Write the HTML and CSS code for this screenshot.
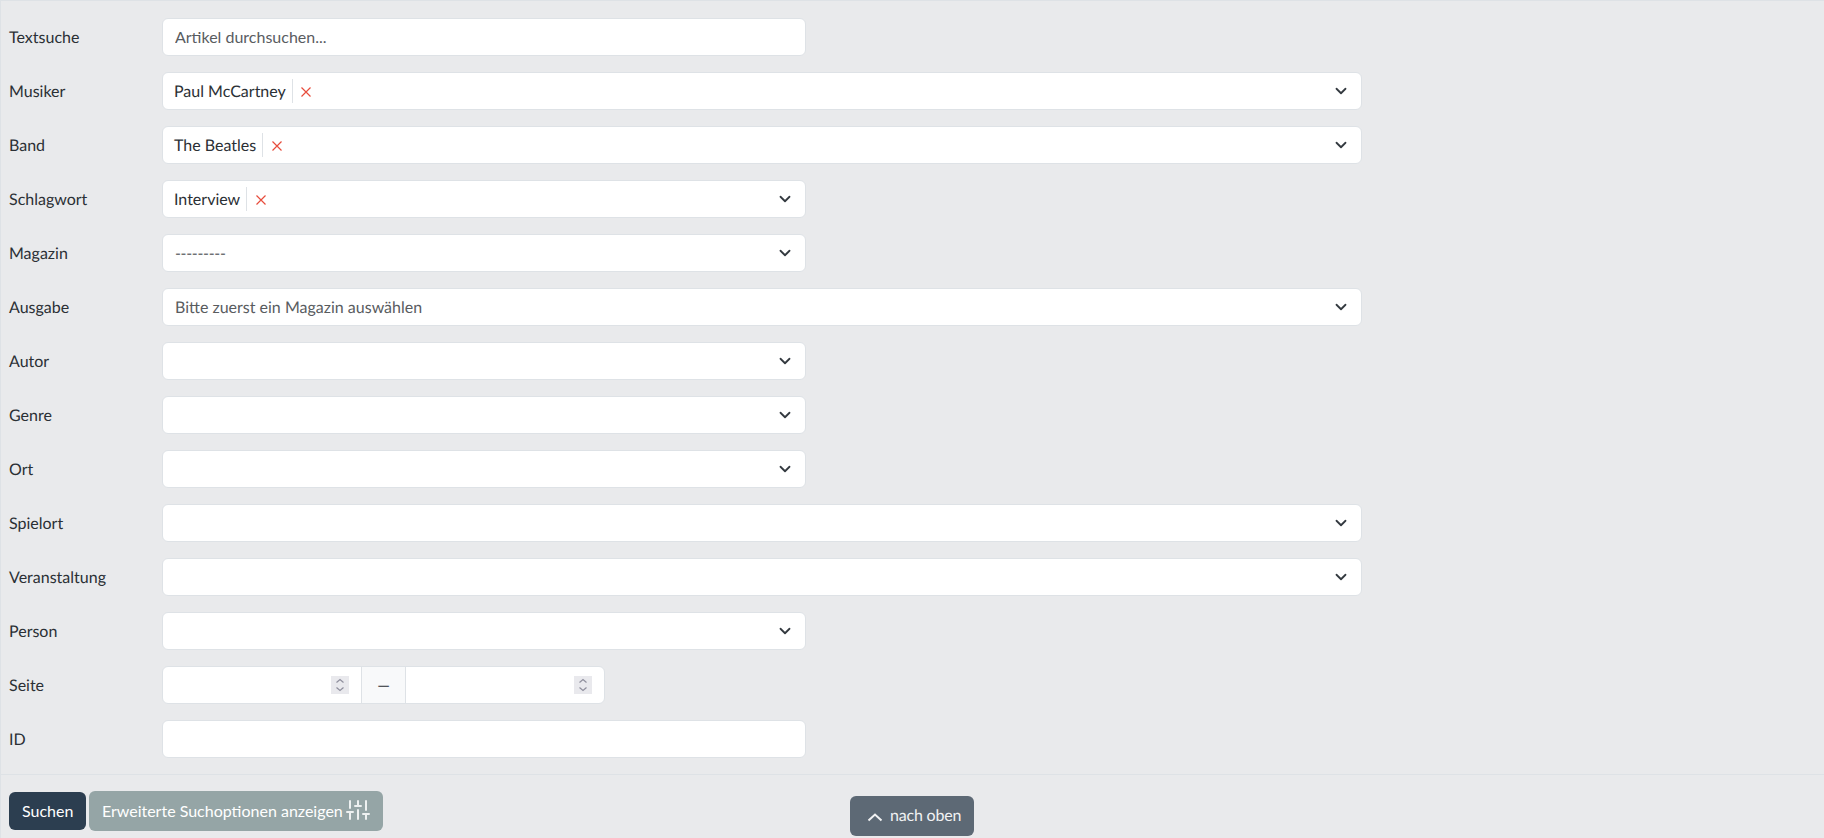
FILE: index.html
```html
<!DOCTYPE html>
<html lang="de">
<head>
<meta charset="utf-8">
<title>Artikelsuche</title>
<link rel="stylesheet" href="styles.css">
</head>
<body>
<svg class="defs" width="0" height="0" aria-hidden="true">
  <symbol id="chev" viewBox="0 0 16 16"><path d="M2 5l6 6 6-6" fill="none" stroke="#343a40" stroke-width="2.400" stroke-linecap="round" stroke-linejoin="round"/></symbol>
  <symbol id="cross" viewBox="0 0 10 10"><path d="M.5.5l9 9M9.500.5l-9 9" fill="none" stroke="#e74c3c" stroke-width="1.200"/></symbol>
  <symbol id="spin" viewBox="0 0 18 18"><path d="M5.500 6.500L9 3.500l3.500 3M5.500 11.500L9 14.500l3.500-3" fill="none" stroke="#8f8f9d" stroke-width="1.200"/></symbol>
</svg>
<form class="search">
  <div class="fields">
    <div class="row"><label>Textsuche</label><div class="ctl narrow"><input class="txt" type="text" placeholder="Artikel durchsuchen..."></div></div>
    <div class="row"><label>Musiker</label><div class="ctl wide tagged"><span class="tag">Paul McCartney</span><svg class="x"><use href="#cross"/></svg><svg class="chev"><use href="#chev"/></svg></div></div>
    <div class="row"><label>Band</label><div class="ctl wide tagged"><span class="tag">The Beatles</span><svg class="x"><use href="#cross"/></svg><svg class="chev"><use href="#chev"/></svg></div></div>
    <div class="row"><label>Schlagwort</label><div class="ctl narrow tagged"><span class="tag">Interview</span><svg class="x"><use href="#cross"/></svg><svg class="chev"><use href="#chev"/></svg></div></div>
    <div class="row"><label>Magazin</label><div class="ctl narrow"><span class="ph blank">---------</span><svg class="chev"><use href="#chev"/></svg></div></div>
    <div class="row"><label>Ausgabe</label><div class="ctl wide"><span class="ph">Bitte zuerst ein Magazin auswählen</span><svg class="chev"><use href="#chev"/></svg></div></div>
    <div class="row"><label>Autor</label><div class="ctl narrow"><svg class="chev"><use href="#chev"/></svg></div></div>
    <div class="row"><label>Genre</label><div class="ctl narrow"><svg class="chev"><use href="#chev"/></svg></div></div>
    <div class="row"><label>Ort</label><div class="ctl narrow"><svg class="chev"><use href="#chev"/></svg></div></div>
    <div class="row"><label>Spielort</label><div class="ctl wide"><svg class="chev"><use href="#chev"/></svg></div></div>
    <div class="row"><label>Veranstaltung</label><div class="ctl wide"><svg class="chev"><use href="#chev"/></svg></div></div>
    <div class="row"><label>Person</label><div class="ctl narrow"><svg class="chev"><use href="#chev"/></svg></div></div>
    <div class="row"><label>Seite</label>
      <div class="ctl range">
        <div class="num"><span class="spin"><svg><use href="#spin"/></svg></span></div>
        <div class="dash">—</div>
        <div class="num"><span class="spin"><svg><use href="#spin"/></svg></span></div>
      </div>
    </div>
    <div class="row"><label>ID</label><div class="ctl narrow"></div></div>
  </div>
  <div class="actions">
    <button class="btn primary" type="button">Suchen</button>
    <button class="btn secondary" type="button">Erweiterte Suchoptionen anzeigen
      <svg class="sliders" viewBox="0 0 24 24"><path d="M4 21v-7M4 10V3M12 21v-9M12 8V3M20 21v-5M20 12V3M1 14h6M9 8h6M17 16h6"/></svg>
    </button>
  </div>
</form>
<a class="top" href="#"><svg viewBox="0 0 16 10"><path d="M1.500 8.500L8 2.500l6.500 6"/></svg>nach oben</a>
</body>
</html>
```

FILE: styles.css
```css
* { box-sizing: border-box; }
html, body { margin: 0; height: 100%; }
body {
  font-family: Lato, "Liberation Sans", sans-serif;
  font-size: 16px;
  color: #2b3035;
  background: #e9eaec;
  overflow: hidden;
  text-rendering: geometricPrecision;
}
.defs { position: absolute; }
.search {
  height: 838px;
  border-top: 1px solid #dee2e6;
  border-left: 1px solid #dee2e6;
}
.fields {
  display: flex;
  flex-direction: column;
  gap: 16px;
  padding: 17px 0 16px 8px;
  border-bottom: 1px solid #dee2e6;
}
.row {
  display: grid;
  grid-template-columns: 153px 1fr;
  align-items: center;
  height: 38px;
}
.row label { line-height: 24px; margin-top: 2px; }
.ctl {
  position: relative;
  display: flex;
  align-items: center;
  height: 38px;
  background: #fff;
  border: 1px solid #dee2e6;
  border-radius: 6px;
}
.narrow { width: 644px; }
.wide { width: 1200px; }
.range { width: 443px; overflow: hidden; }
.txt {
  width: 100%;
  height: 100%;
  border: 0;
  border-radius: 6px;
  padding: 0 12px 2px;
  background: transparent;
  font: inherit;
  color: inherit;
}
.txt::placeholder { color: #595c5f; opacity: 1; }
.ph { padding: 0 0 0 12px; color: #595c5f; }
.blank { letter-spacing: -0.33px; }
.tag {
  display: flex;
  align-items: center;
  height: 24px;
  margin-left: 11px;
  padding: 0 6px 0 0;
  border-right: 1px solid #dee2e6;
}
.x { width: 10px; height: 10px; margin: 2px 0 0 8.5px; }
.chev {
  position: absolute;
  right: 14px;
  top: 12px;
  width: 12px;
  height: 12px;
}
.num {
  position: relative;
  flex: 1;
  height: 100%;
}
.dash {
  width: 45px;
  flex: none;
  height: 100%;
  display: flex;
  align-items: center;
  justify-content: center;
  background: #f8f9fa;
  border-left: 1px solid #dee2e6;
  border-right: 1px solid #dee2e6;
}
.spin {
  position: absolute;
  right: 12px;
  top: 9px;
  width: 18px;
  height: 18px;
  background: #e9e9ed;
}
.spin svg { display: block; width: 18px; height: 18px; }
.actions {
  display: flex;
  align-items: center;
  gap: 3px;
  padding: 16px 0 0 8px;
}
.btn {
  border: 0;
  border-radius: 6px;
  font: inherit;
  color: #fff;
  padding: 0 13px 2px;
  display: flex;
  align-items: center;
}
.primary { background: #2c3e50; height: 38px; }
.secondary { background: #95a5a6; height: 40px; gap: 3px; padding-left: 12.500px; }
.sliders {
  width: 24px;
  height: 24px;
  fill: none;
  stroke: #eef1f1;
  stroke-width: 2;
  stroke-linecap: round;
}
.top {
  position: fixed;
  left: 850px;
  top: 796px;
  width: 124px;
  height: 40px;
  display: flex;
  align-items: center;
  gap: 7px;
  padding: 0 0 2px 17px;
  border-radius: 6px;
  background: #5d6975;
  color: #f1f2f3;
  letter-spacing: -0.2px;
  text-decoration: none;
}
.top svg {
  width: 16px;
  height: 10px;
  fill: none;
  stroke: #f1f2f3;
  stroke-width: 2;
  margin-top: 4px;
}
```
